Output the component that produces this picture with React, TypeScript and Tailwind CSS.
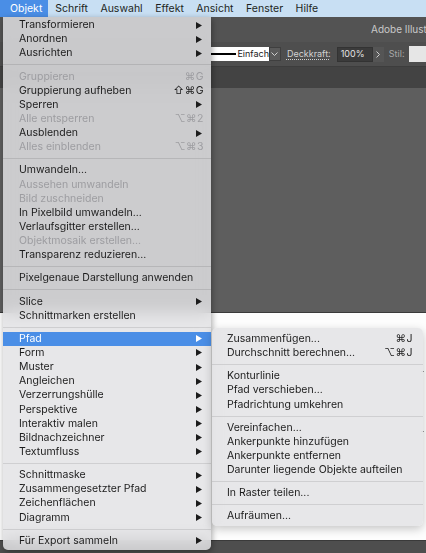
import clsx from "clsx";

type Item = {
	label: string;
	disabled?: boolean;
	shortcut?: string;
	sub?: boolean;
	active?: boolean;
};

const mainGroups: Item[][] = [
	[
		{ label: "Transformieren", sub: true },
		{ label: "Anordnen", sub: true },
		{ label: "Ausrichten", sub: true },
	],
	[
		{ label: "Gruppieren", disabled: true, shortcut: "⌘G" },
		{ label: "Gruppierung aufheben", shortcut: "⇧⌘G" },
		{ label: "Sperren", sub: true },
		{ label: "Alle entsperren", disabled: true, shortcut: "⌥⌘2" },
		{ label: "Ausblenden", sub: true },
		{ label: "Alles einblenden", disabled: true, shortcut: "⌥⌘3" },
	],
	[
		{ label: "Umwandeln..." },
		{ label: "Aussehen umwandeln", disabled: true },
		{ label: "Bild zuschneiden", disabled: true },
		{ label: "In Pixelbild umwandeln..." },
		{ label: "Verlaufsgitter erstellen..." },
		{ label: "Objektmosaik erstellen...", disabled: true },
		{ label: "Transparenz reduzieren..." },
	],
	[{ label: "Pixelgenaue Darstellung anwenden" }],
	[{ label: "Slice", sub: true }, { label: "Schnittmarken erstellen" }],
	[
		{ label: "Pfad", sub: true, active: true },
		{ label: "Form", sub: true },
		{ label: "Muster", sub: true },
		{ label: "Angleichen", sub: true },
		{ label: "Verzerrungshülle", sub: true },
		{ label: "Perspektive", sub: true },
		{ label: "Interaktiv malen", sub: true },
		{ label: "Bildnachzeichner", sub: true },
		{ label: "Textumfluss", sub: true },
	],
	[
		{ label: "Schnittmaske", sub: true },
		{ label: "Zusammengesetzter Pfad", sub: true },
		{ label: "Zeichenflächen", sub: true },
		{ label: "Diagramm", sub: true },
	],
	[{ label: "Für Export sammeln", sub: true }],
];

const pathGroups: Item[][] = [
	[
		{ label: "Zusammenfügen...", shortcut: "⌘J" },
		{ label: "Durchschnitt berechnen...", shortcut: "⌥⌘J" },
	],
	[
		{ label: "Konturlinie" },
		{ label: "Pfad verschieben..." },
		{ label: "Pfadrichtung umkehren" },
	],
	[
		{ label: "Vereinfachen..." },
		{ label: "Ankerpunkte hinzufügen" },
		{ label: "Ankerpunkte entfernen" },
		{ label: "Darunter liegende Objekte aufteilen" },
	],
	[{ label: "In Raster teilen..." }],
	[{ label: "Aufräumen..." }],
];

const menuBar = ["Schrift", "Auswahl", "Effekt", "Ansicht", "Fenster", "Hilfe"];

function Arrow() {
	return (
		<svg width="6" height="7" viewBox="0 0 6 7" className="mr-[2px] shrink-0">
			<path d="M0 0 L6 3.5 L0 7 Z" fill="currentColor" />
		</svg>
	);
}

function Row({ item, pl, pr }: { item: Item; pl: string; pr: string }) {
	return (
		<div
			className={clsx(
				"flex h-[14.15px] items-center",
				pl,
				pr,
				item.active
					? "bg-[#4a8ee6] text-white"
					: item.disabled
						? "text-[#9d9da1]"
						: "text-[#1c1c1c]",
			)}
		>
			<span className="flex-1 whitespace-nowrap">{item.label}</span>
			{item.shortcut && (
				<span className="whitespace-nowrap tracking-[0.5px]">
					{item.shortcut}
				</span>
			)}
			{item.sub && <Arrow />}
		</div>
	);
}

function Menu({
	groups,
	pl,
	pr,
}: {
	groups: Item[][];
	pl: string;
	pr: string;
}) {
	return (
		<>
			{groups.map((group, gi) => (
				<div key={gi}>
					{gi > 0 && (
						<div className="flex h-[9px] items-center">
							<div className="h-px w-full bg-black/10" />
						</div>
					)}
					{group.map((item) => (
						<Row key={item.label} item={item} pl={pl} pr={pr} />
					))}
				</div>
			))}
		</>
	);
}

export default function App() {
	return (
		<div className="relative h-[553px] w-full overflow-hidden bg-[#535353] font-['Inter','DejaVu_Sans',sans-serif] text-[10.5px]">
			{/* macOS menu bar */}
			<div className="flex h-[17px] items-center bg-[#c8dff3] text-[10.5px] text-[#1d1f22]">
				<div className="flex h-full items-center bg-[#4a8ee6] pl-[10px] pr-[6px] text-white">
					Objekt
				</div>
				<div className="ml-[7px] flex gap-[12.5px]">
					{menuBar.map((m) => (
						<span key={m}>{m}</span>
					))}
				</div>
			</div>

			{/* app title */}
			<div className="flex h-[25px] items-center overflow-hidden whitespace-nowrap bg-[#535353] pl-[371px] text-[10px] text-[#c9c9c9]">
				Adobe Illustrator
			</div>

			{/* control bar */}
			<div className="flex h-[25px] items-center whitespace-nowrap border-b border-[#3d3d3d] bg-[#4e4e4e] pl-[211px] text-[9px]">
				<div className="flex h-[14px] w-[58px] items-center bg-white">
					<div className="h-[1.5px] w-[27px] bg-black" />
					<span className="ml-[1px] text-[#222]">Einfach</span>
				</div>
				<div className="flex h-[14px] w-[14px] items-center justify-center border border-[#3f3f3f] bg-[#5a5a5a] text-[#cfcfcf]">
					<svg width="7" height="4" viewBox="0 0 7 4">
						<path d="M0.5 0.5 L3.5 3.5 L6.5 0.5" stroke="currentColor" fill="none" />
					</svg>
				</div>
				<span className="ml-[6px] text-[#d2d2d2] underline decoration-dotted underline-offset-2">
					Deckkraft:
				</span>
				<div className="ml-[6px] flex h-[15px] w-[43px] items-center border border-[#333] bg-[#3b3b3b] pl-[3px] text-[#e2e2e2]">
					100%
				</div>
				<div className="flex h-[15px] w-[13px] items-center justify-center bg-[#555] text-[#cfcfcf]">
					<svg width="4" height="7" viewBox="0 0 4 7">
						<path d="M0.5 0.5 L3.5 3.5 L0.5 6.5" stroke="currentColor" fill="none" />
					</svg>
				</div>
				<span className="ml-[5px] text-[#a8a8a8]">Stil:</span>
				<div className="ml-[5px] h-[16px] w-[20px] bg-[#e6e6e6]" />
			</div>

			{/* dark strip + canvas */}
			<div className="h-[21px] bg-[#434343]" />
			<div className="h-[225px] border-b border-[#3a3a3a] bg-[#5e5e5e]" />
			<div className="relative h-[227px] bg-[#fdfdfd]">
				<div className="absolute right-[2px] top-[58px] h-px w-[3px] bg-[#9a9a9a]" />
				<div className="absolute right-[2px] top-[118px] h-px w-[3px] bg-[#9a9a9a]" />
			</div>
			<div className="h-[13px] border-t border-[#3a3a3a] bg-[#4e4e4e]" />

			{/* Objekt menu */}
			<div className="absolute left-[3px] top-[17px] w-[208px] rounded-b-[5px] bg-[rgba(226,226,228,0.83)] pb-[2px] pt-[1px] shadow-[1px_2px_6px_rgba(0,0,0,0.35)] backdrop-blur-sm">
				<Menu groups={mainGroups} pl="pl-[16px]" pr="pr-[7px]" />
			</div>

			{/* Pfad submenu */}
			<div className="absolute left-[212px] top-[328px] w-[211px] rounded-[5px] bg-[rgba(226,226,228,0.83)] pb-[3px] pt-[3.85px] shadow-[0_3px_10px_rgba(0,0,0,0.22)] backdrop-blur-sm">
				<Menu groups={pathGroups} pl="pl-[15px]" pr="pr-[10px]" />
			</div>
		</div>
	);
}
